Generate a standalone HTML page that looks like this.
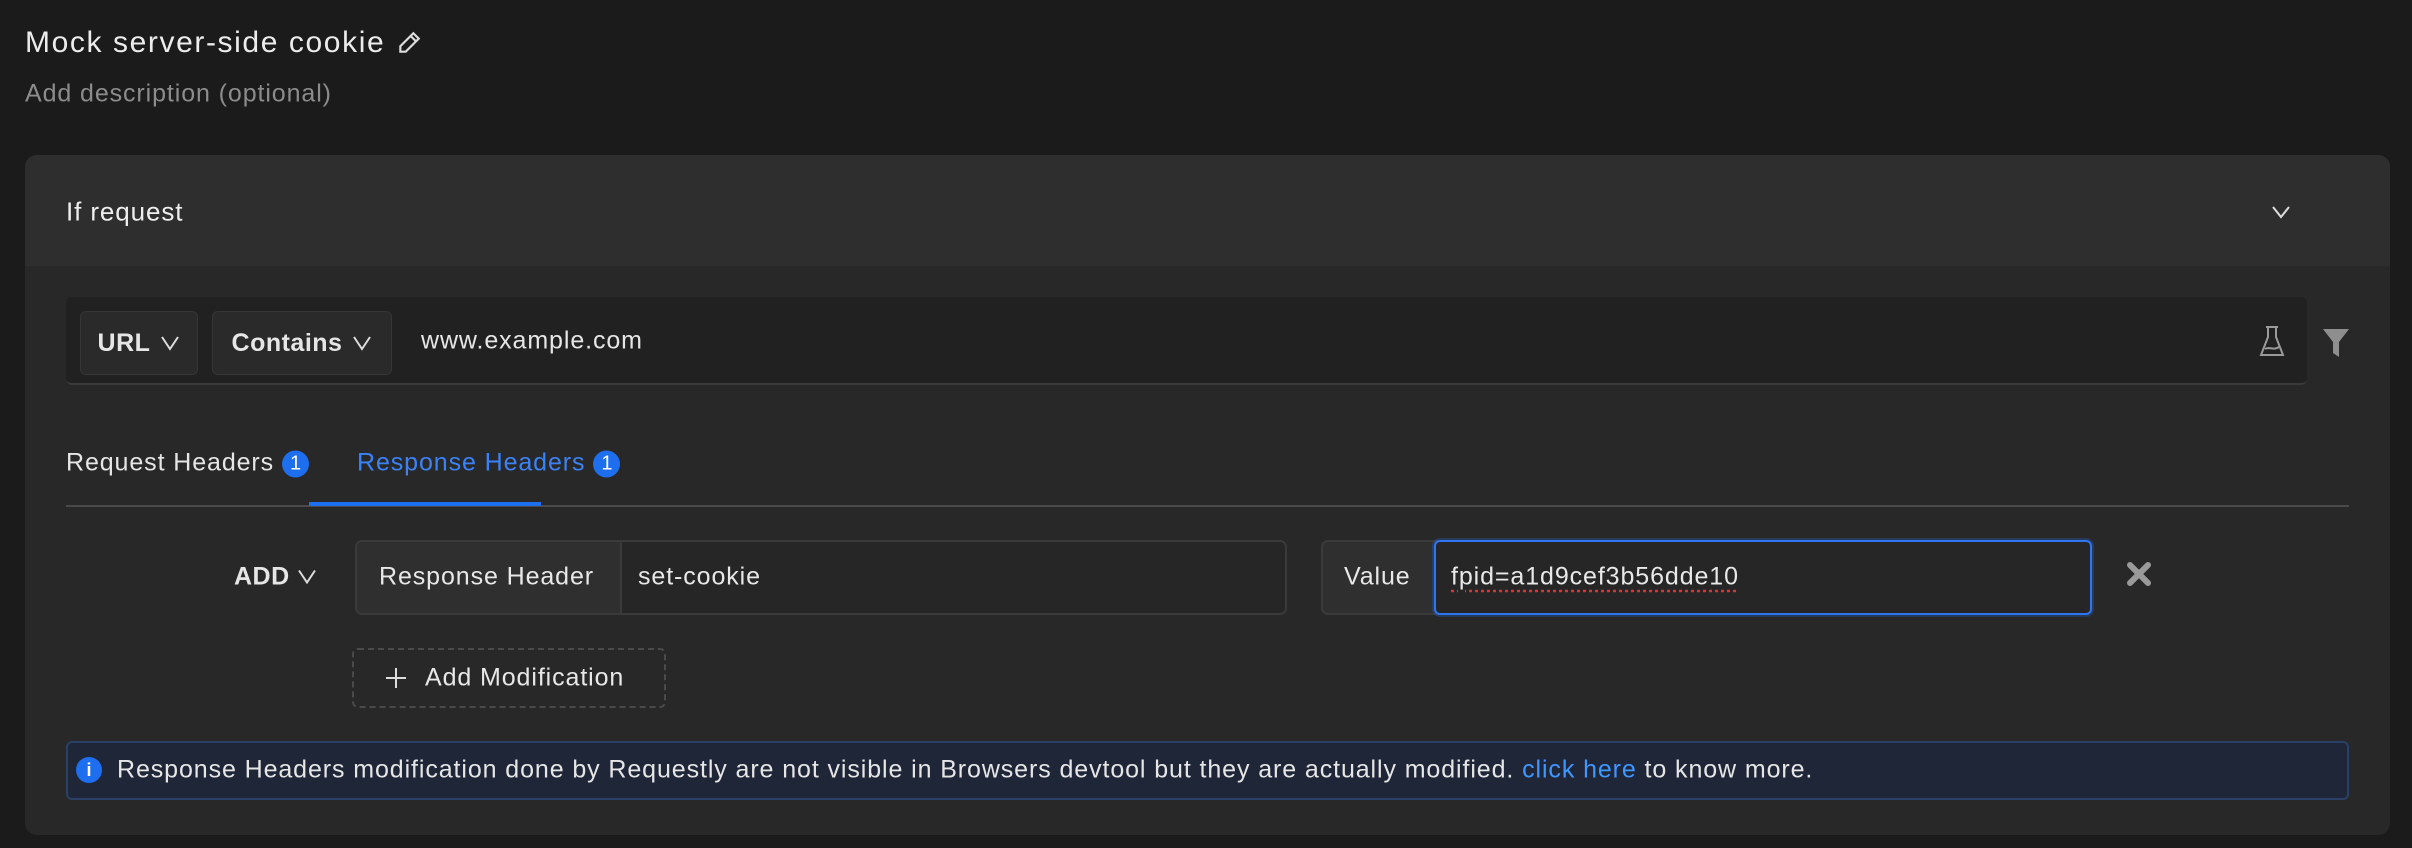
<!DOCTYPE html>
<html><head><meta charset="utf-8"><style>
*{box-sizing:border-box;margin:0;padding:0}
body{width:2412px;height:848px;background:#1b1b1b;font-family:"Liberation Sans",sans-serif;color:#e8e8e8;position:relative;overflow:hidden;font-size:25px;letter-spacing:0.9px}
.a{position:absolute;white-space:nowrap}
.mid{transform:translateY(-50%)}
.btn{position:absolute;background:#2a2a2a;border:1px solid #363636;border-radius:6px;display:flex;align-items:center;justify-content:center;font-weight:bold;font-size:25px;color:#e6e6e6;letter-spacing:0.5px}
.badge{display:inline-block;width:27px;height:27px;border-radius:50%;background:#1e6ef0;color:#fff;font-size:20px;text-align:center;line-height:27px;vertical-align:middle;margin-left:8px;letter-spacing:0}
</style></head><body>
<div class="a mid" style="left:25px;top:43px;font-size:30px;color:#ececec;letter-spacing:1.6px">Mock server-side cookie</div>
<svg class="a" style="left:396px;top:30px" width="26" height="26" viewBox="0 0 24 24" fill="none" stroke="#ddd" stroke-width="2"><path d="M16 3l5 5L9 20H4v-5z M13.5 5.5l5 5"/></svg>
<div class="a mid" style="left:25px;top:94px;font-size:25px;color:#8c8c8c">Add description (optional)</div>

<div class="a" style="left:25px;top:155px;width:2365px;height:680px;background:#282828;border-radius:12px;overflow:hidden">
 <div style="position:absolute;left:0;top:0;right:0;height:111px;background:#2e2e2e"></div>
</div>
<div class="a mid" style="left:66px;top:212px;font-size:26px;color:#eee">If request</div>
<svg class="a" style="left:2270px;top:202px" width="22" height="20" viewBox="0 0 22 20" fill="none" stroke="#ddd" stroke-width="2"><path d="M3 5l8 10 8-10"/></svg>

<div class="a" style="left:66px;top:297px;width:2241px;height:88px;background:#212121;border-radius:6px;border-bottom:2px solid #3a3a3a"></div>
<div class="btn" style="left:80px;top:311px;width:118px;height:64px">URL <svg style="margin-left:10px" width="20" height="16" viewBox="0 0 20 16" fill="none" stroke="#ddd" stroke-width="2"><path d="M2 2l8 12 8-12"/></svg></div>
<div class="btn" style="left:212px;top:311px;width:180px;height:64px">Contains <svg style="margin-left:10px" width="20" height="16" viewBox="0 0 20 16" fill="none" stroke="#ddd" stroke-width="2"><path d="M2 2l8 12 8-12"/></svg></div>
<div class="a mid" style="left:421px;top:341px;color:#e6e6e6">www.example.com</div>
<svg class="a" style="left:2258px;top:325px" width="28" height="34" viewBox="0 0 28 34" fill="none" stroke="#9a9a9a" stroke-width="2"><path d="M8 2h12 M10 2v10L3 30h22L18 12V2 M7 24c4-3 8 2 14-2"/></svg>
<svg class="a" style="left:2322px;top:328px" width="28" height="30" viewBox="0 0 28 30"><path d="M1 1h26L17 14v15l-6-4V14z" fill="#8e8e8e"/></svg>

<div class="a mid" style="left:66px;top:463px;color:#e6e6e6">Request Headers<span class="badge">1</span></div>
<div class="a mid" style="left:357px;top:463px;color:#3b82f6">Response Headers<span class="badge">1</span></div>
<div class="a" style="left:66px;top:505px;width:2283px;height:2px;background:#4a4a4a"></div>
<div class="a" style="left:309px;top:502px;width:232px;height:4px;background:#1e6ef0"></div>

<div class="a mid" style="left:234px;top:577px;font-weight:bold;color:#e6e6e6;letter-spacing:0.5px">ADD <svg width="20" height="16" viewBox="0 0 20 16" fill="none" stroke="#ddd" stroke-width="2"><path d="M2 2l8 12 8-12"/></svg></div>
<div class="a" style="left:355px;top:540px;width:932px;height:75px;border:2px solid #3a3a3a;border-radius:7px;background:#262626;overflow:hidden">
 <div style="position:absolute;left:0;top:0;bottom:0;width:265px;background:#2f2f2f;border-right:2px solid #3a3a3a"></div>
</div>
<div class="a mid" style="left:379px;top:577px">Response Header</div>
<div class="a mid" style="left:638px;top:577px">set-cookie</div>

<div class="a" style="left:1321px;top:540px;width:771px;height:75px;border:2px solid #3a3a3a;border-radius:7px;background:#2f2f2f"></div>
<div class="a" style="left:1434px;top:540px;width:658px;height:75px;border:2px solid #2f74f0;border-radius:6px;background:#262626;box-shadow:0 0 0 2px rgba(30,110,240,.25)"></div>
<div class="a mid" style="left:1344px;top:577px">Value</div>
<div class="a mid" style="left:1451px;top:577px;text-decoration:underline dotted #d33;text-underline-offset:5px">fpid=a1d9cef3b56dde10</div>
<svg class="a" style="left:2125px;top:560px" width="28" height="28" viewBox="0 0 28 28" stroke="#9a9a9a" stroke-width="6" stroke-linecap="round"><path d="M5 5l18 18M23 5L5 23"/></svg>

<div class="a" style="left:352px;top:648px;width:314px;height:60px;border:2px dashed #4a4a4a;border-radius:6px"></div>
<svg class="a" style="left:384px;top:666px" width="24" height="24" viewBox="0 0 24 24" stroke="#ddd" stroke-width="2"><path d="M12 2v20M2 12h20"/></svg>
<div class="a mid" style="left:425px;top:678px">Add Modification</div>

<div class="a" style="left:66px;top:741px;width:2283px;height:59px;background:#1e2638;border:2px solid #2a4066;border-radius:6px"></div>
<div class="a" style="left:76px;top:757px;width:26px;height:26px;border-radius:50%;background:#1e6ef0;color:#fff;font-size:18px;text-align:center;line-height:26px;font-weight:bold;letter-spacing:0">i</div>
<div class="a mid" style="left:117px;top:770px;color:#e6e6e6">Response Headers modification done by Requestly are not visible in Browsers devtool but they are actually modified. <span style="color:#4096ff">click here</span> to know more.</div>
</body></html>
